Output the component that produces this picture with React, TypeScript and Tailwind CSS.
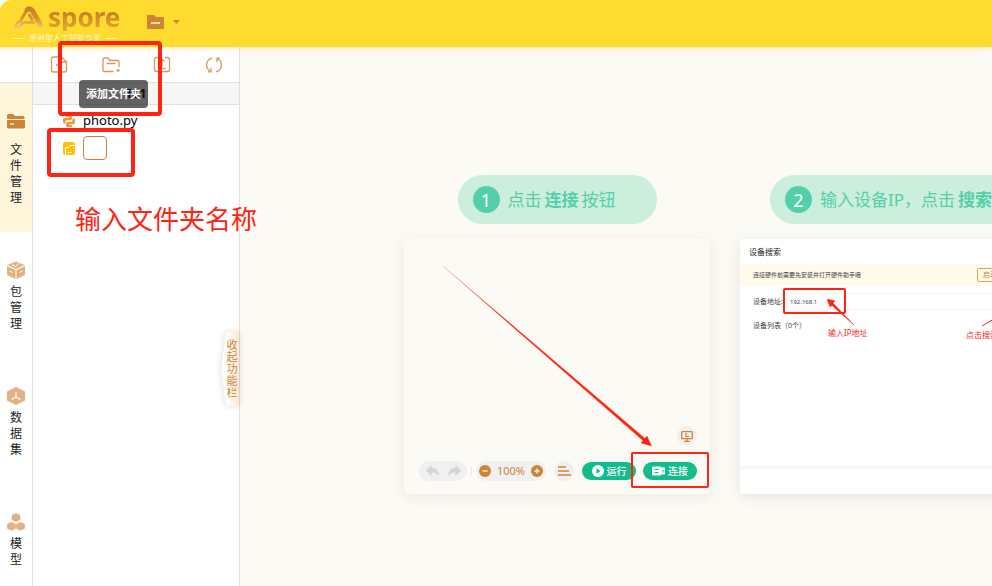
import { ReactNode } from 'react';

const ORANGE = '#cf8339';

function Logo() {
  return (
    <div className="flex flex-col">
      <div className="flex items-center gap-[3px] h-7">
        <svg width="32" height="25" viewBox="0 0 32 25" fill="none">
          <defs>
            <linearGradient id="mark" gradientUnits="userSpaceOnUse" x1="0" y1="2" x2="0" y2="25">
              <stop offset="0" stopColor="#c47d26" />
              <stop offset="0.5" stopColor="#d6952b" />
              <stop offset="1" stopColor="#f8d873" />
            </linearGradient>
          </defs>
          <path d="M14 5q3-3 6 1.500L27.500 20" stroke="url(#mark)" strokeWidth="5" strokeLinecap="round" />
          <path d="M13 6.500L8.500 14M16.500 10l2.500 4.500" stroke="url(#mark)" strokeWidth="3" strokeLinecap="round" />
          <path d="M21 17.500H12q-2.500 0-3.500 2-1.500 3.500-5 3.500" stroke="url(#mark)" strokeWidth="3" strokeLinecap="round" />
          <path d="M7.500 16q-4 1.500-5.500 7" stroke="url(#mark)" strokeWidth="2.500" strokeLinecap="round" />
        </svg>
        <span className="bg-gradient-to-b from-[#c47d26] from-30% to-[#e6ac2a] bg-clip-text text-[26px] leading-7 font-bold text-transparent">
          spore
        </span>
      </div>
      <div className="flex items-center gap-[5px] text-[8px] leading-[14px] text-[#fff7d0]">
        <i className="h-px w-[11px] bg-[#fff0a8]" />
        原创型人工智能专家
        <i className="h-px w-[11px] bg-[#fff0a8]" />
      </div>
    </div>
  );
}

function Header() {
  return (
    <header className="relative z-10 flex h-[47px] shrink-0 items-start rounded-tl-xl bg-[#ffdb2f] pt-[3px] pl-[13px] shadow-[0_1px_4px_rgba(255,200,60,0.5)]">
      <Logo />
      <button aria-label="项目菜单" className="mt-3 ml-[27px] flex items-center gap-[9px]">
        <svg width="17" height="14" viewBox="0 0 17 14">
          <path d="M0 0h7l2 2h8v12H0z" fill={ORANGE} />
          <path d="M4 8h9" stroke="#ffe48a" strokeWidth="2" />
        </svg>
        <svg width="7" height="4" viewBox="0 0 7 4">
          <path d="M0 0h7L3.500 4z" fill={ORANGE} />
        </svg>
      </button>
    </header>
  );
}

const navItems: { label: string; active?: boolean; icon: ReactNode }[] = [
  {
    label: '文件管理',
    active: true,
    icon: (
      <svg width="18" height="18" viewBox="0 0 18 18">
        <path d="M0 3.500Q0 2 1.500 2H6l2 2h8q1.500 0 1.500 1.500V7H0z" fill={ORANGE} />
        <path d="M0 8h18v7q0 1.500-1.500 1.500h-15Q0 16.500 0 15z" fill={ORANGE} />
        <path d="M3 12h4" stroke="#fff6dc" strokeWidth="1.300" />
      </svg>
    ),
  },
  {
    label: '包管理',
    icon: (
      <svg width="18" height="18" viewBox="0 0 18 18">
        <path d="M9 .5L17.500 4 9 8 .5 4z" fill="#e2b184" />
        <path d="M0 5l8.500 4v9L0 14zM18 5L9.500 9v9l8.500-4z" fill="#e2b184" />
        <path d="M5 3.500l3.500 2 4-3.500M2.500 10l3 1.500M12.500 11.500l3-1.500" stroke="#fff" strokeWidth="1" fill="none" />
      </svg>
    ),
  },
  {
    label: '数据集',
    icon: (
      <svg width="18" height="18" viewBox="0 0 18 18">
        <path d="M9 0l9 4.500v9L9 18l-9-4.500v-9z" fill="#e2b184" />
        <path d="M9 5v5l-4.500 2.500M9 10l4.500 2.500" stroke="#fff" strokeWidth="1.200" fill="none" />
      </svg>
    ),
  },
  {
    label: '模型',
    icon: (
      <svg width="18" height="18" viewBox="0 0 18 18" fill="#e2b184" stroke="#e2b184" strokeWidth="0.800" strokeLinejoin="round">
        <path d="M9 .5l4 2v4l-4 2-4-2v-4z" />
        <path d="M4.500 9.300l4 2v4l-4 2-4-2v-4zM13.500 9.300l4 2v4l-4 2-4-2v-4z" />
      </svg>
    ),
  },
];

function SideNav() {
  return (
    <nav className="flex w-[33px] shrink-0 flex-col border-r border-[#e3e0d8] bg-white">
      <div className="h-9 shrink-0 border-b border-[#e3e0d8]" />
      {navItems.map((item) => (
        <button
          key={item.label}
          className={`flex w-full shrink-0 flex-col items-center pt-[29px] pb-[26px] text-xs leading-4 text-[#222] ${
            item.active ? 'gap-3 bg-[#fff6dc]' : 'gap-[5px]'
          }`}
        >
          {item.icon}
          <span className="w-3 break-all">{item.label}</span>
        </button>
      ))}
    </nav>
  );
}

const tools = [
  { label: '添加文件', path: 'M10.500 1H3.500Q1.500 1 1.500 3v11q0 2 2 2h11q2 0 2-2V6l-5-5v5h5M6 9h6M9 6v6' },
  { label: '添加文件夹', path: 'M11.500 15.500H2.500Q1 15.500 1 14V3.500Q1 2 2.500 2H6l2 2.500h7.500Q17 4.500 17 6v5M4.500 7.500h9M14.500 14.500h3M16 13v3' },
  { label: '上传', path: 'M6 1.500H3.500q-2 0-2 2v10q0 2 2 2h11q2 0 2-2v-10q0-2-2-2H12M9 11V3M6.500 5.500L9 3l2.500 2.500M5.500 12.500h7' },
  { label: '刷新', path: 'M7 2.200A7 7 0 0 0 5 15M6 12V15.800H3M11 15.800A7 7 0 0 0 13 3M12 6V2.200H15' },
];

function CollapseTab() {
  return (
    <button className="absolute top-[285px] right-0 flex h-[74px] w-[18px] items-center justify-end pr-px text-[11px] leading-3 text-[#cf8339]">
      <svg className="absolute inset-0 overflow-visible drop-shadow-[0_0_3px_rgba(0,0,0,0.15)]" width="18" height="74" viewBox="0 0 18 74">
        <defs>
          <linearGradient id="tab" x1="0" x2="1">
            <stop offset="0.400" stopColor="#fffdfa" />
            <stop offset="1" stopColor="#ffe6d3" />
          </linearGradient>
        </defs>
        <path d="M8 0H18V74H8Q5 74 4.500 71L0 37 4.500 3Q5 0 8 0z" fill="url(#tab)" />
      </svg>
      <span className="relative w-3 break-all">收起功能栏</span>
    </button>
  );
}

function FilePanel() {
  return (
    <aside className="relative w-[207px] shrink-0 border-r border-[#e3e0d8] bg-white">
      <div className="flex h-9 items-center justify-between border-b border-[#e3e0d8] pr-4 pl-[17px]">
        {tools.map((tool) => (
          <button key={tool.label} aria-label={tool.label}>
            <svg width="18" height="18" viewBox="0 0 18 18" fill="none" stroke="#d9975c" strokeWidth="1.300">
              <path d={tool.path} />
            </svg>
          </button>
        ))}
      </div>
      <div className="h-[22px] border-b border-[#e3e0d8] bg-[#f6f6f6] text-center text-xs leading-[21px] font-bold text-[#222]">
        T21
      </div>
      <ul className="pl-[30px] text-[13px] text-black">
        <li className="flex h-[31px] items-center gap-2">
          <svg width="12" height="12" viewBox="0 0 12 12" fill="#f79433">
            <path d="M4.500 0h3Q9 0 9 1.500v2Q9 5 7.500 5h-3Q2.500 5 2.500 7v1.500h-1Q0 8.500 0 7V4.500Q0 3 1.500 3H6v-.7H3V1.500Q3 0 4.500 0z" />
            <path d="M7.500 12h-3Q3 12 3 10.500v-2Q3 7 4.500 7h3q2 0 2-2V3.500h1Q12 3.500 12 5v2.500Q12 9 10.500 9H6v.7h3v.8Q9 12 7.500 12z" />
          </svg>
          photo.py
        </li>
        <li className="flex h-6 items-center gap-2">
          <svg width="12" height="13" viewBox="0 0 12 13">
            <rect width="12" height="13" rx="2" fill="#ffc107" />
            <path d="M2.500 13V7q0-1.500 1.500-1.500h1.500l1.500-2H12M5 10.500h4" stroke="#fff" fill="none" />
          </svg>
          <input aria-label="文件夹名称" className="h-6 w-6 rounded border border-[#cf8339] bg-white outline-none" />
        </li>
      </ul>
      <CollapseTab />
    </aside>
  );
}

function StepTitle({ num, children }: { num: number; children: ReactNode }) {
  return (
    <h2 className="flex h-[49px] items-center gap-2 rounded-full bg-[#cbeedd] pr-[41px] pl-[15px] text-[17px] whitespace-nowrap text-[#54cfaa]">
      <span className="flex size-[27px] items-center justify-center rounded-full bg-[#54cfaa] text-lg text-white">{num}</span>
      <span>{children}</span>
    </h2>
  );
}

function EditorCard() {
  return (
    <div className="relative flex h-[255px] w-[306px] flex-col justify-end rounded bg-[#fbfaf5] px-[13px] pb-[13px] shadow-[0_3px_14px_rgba(120,110,80,0.12)]">
      <button aria-label="屏幕" className="mb-[15px] flex size-5 items-center justify-center self-end rounded-full bg-[#f0f0f0]">
        <svg width="12" height="11" viewBox="0 0 12 11" fill="none" stroke={ORANGE} strokeWidth="1.300">
          <rect x="0.700" y="0.700" width="10.600" height="7" rx="0.800" />
          <path d="M6 8v2M3 10.300h6M4 3h2M4 5.300h4" />
        </svg>
      </button>
      <div className="flex items-center pl-0.5">
        <div className="flex h-5 w-12 items-center justify-around rounded-full bg-[#f0f0f0] px-0.5">
          <button aria-label="撤销">
            <svg width="13" height="12" viewBox="0 0 13 12" fill="#d4d4d4">
              <path d="M5.500 0v3q7 0 7.500 8-3-4-7.500-3.500V11L0 5.500z" />
            </svg>
          </button>
          <button aria-label="重做">
            <svg width="13" height="12" viewBox="0 0 13 12" fill="#d4d4d4">
              <path d="M7.500 0v3Q.5 3 0 11q3-4 7.500-3.500V11L13 5.500z" />
            </svg>
          </button>
        </div>
        <i className="mx-1 h-2.5 w-px bg-[#e8e8e8]" />
        <div className="flex h-5 w-[70px] items-center justify-between rounded-full bg-[#f0f0f0] px-[3px] text-[11px] text-[#cf8339]">
          <button aria-label="缩小">
            <svg width="12" height="12" viewBox="0 0 12 12">
              <circle cx="6" cy="6" r="6" fill={ORANGE} />
              <path d="M3.500 6h5" stroke="#fff" strokeWidth="1.300" />
            </svg>
          </button>
          100%
          <button aria-label="放大">
            <svg width="12" height="12" viewBox="0 0 12 12">
              <circle cx="6" cy="6" r="6" fill={ORANGE} />
              <path d="M3.500 6h5M6 3.500v5" stroke="#fff" strokeWidth="1.300" />
            </svg>
          </button>
        </div>
        <button aria-label="对齐" className="ml-2 flex size-5 items-center justify-center rounded-full bg-[#f0f0f0]">
          <svg width="13" height="10" viewBox="0 0 13 10" stroke={ORANGE} strokeWidth="1.400">
            <path d="M0 1h8M0 5h11M0 9h13" />
          </svg>
        </button>
        <button className="ml-2 flex h-[18px] w-[54px] items-center justify-center gap-[3px] rounded-full bg-[#13bd8b] text-[10px] font-medium text-white">
          <svg width="12" height="12" viewBox="0 0 12 12">
            <circle cx="6" cy="6" r="6" fill="#fff" />
            <path d="M4.500 3l4 3-4 3z" fill="#13bd8b" />
          </svg>
          运行
        </button>
        <button className="ml-[7px] flex h-[18px] w-[54px] items-center justify-center gap-[3px] rounded-full bg-[#13bd8b] text-[10px] font-medium text-white">
          <svg width="13" height="10" viewBox="0 0 13 10">
            <path d="M1 .5h7q1 0 1 1v7q0 1-1 1H1q-1 0-1-1v-7q0-1 1-1zM9 1.500h4v7H9z" fill="#fff" />
            <path d="M2.500 3.500h4M2.500 6.500h4M11 3.500v3" stroke="#13bd8b" />
          </svg>
          连接
        </button>
      </div>
      {/* arrow pointing at the connect button */}
      <svg className="absolute top-[26px] left-[38px]" width="212" height="184" viewBox="0 0 212 184">
        <defs>
          <linearGradient id="fade" x1="0" y1="0" x2="1" y2="1">
            <stop offset="0" stopColor="#ff2314" stopOpacity="0.300" />
            <stop offset="0.300" stopColor="#ff2314" />
          </linearGradient>
        </defs>
        <path d="M1 1L203 173.500l2-2.500 4.500 10-10.500-3 2-2.500z" fill="url(#fade)" stroke="url(#fade)" strokeWidth="0.400" />
      </svg>
      <div className="absolute top-[213px] left-[227px] h-9 w-[78px] rounded-xs border-2 border-[#ff2314]" />
    </div>
  );
}

function SearchCard() {
  return (
    <div className="relative flex h-[255px] w-[323px] flex-col overflow-hidden rounded bg-white text-[7px] leading-3 text-[#444]">
      <h3 className="h-[25px] pl-[9px] text-[8px] leading-[26px] text-[#222]">设备搜索</h3>
      <div className="flex h-[22px] items-center justify-between bg-[#fffae9] px-[13px] text-[6px]">
        连接硬件前需要先安装并打开硬件助手哦
        <button className="h-3.5 w-[73px] rounded-xs border border-[#dca36f] pl-[5px] text-left text-[7px] text-[#cf8339]">
          启动硬件助手
        </button>
      </div>
      <div className="mt-[7px] flex items-center gap-1 pl-[13px]">
        <label htmlFor="ip" className="w-[29px] whitespace-nowrap">设备地址:</label>
        <input id="ip" defaultValue="192.168.1" className="h-[17px] min-w-0 flex-1 border-y border-[#f3f3f3] pl-1 text-[6px] outline-none" />
      </div>
      <div className="mt-2.5 pl-[13px]">设备列表（0个）</div>
      <div className="mt-auto h-7 border-t-[3px] border-[#f7f7f7]" />

      <div className="absolute top-[49px] left-[43px] h-[26px] w-[63px] rounded-xs border-2 border-[#ff2314]" />
      <svg className="absolute top-[60px] left-[87px]" width="28" height="27" viewBox="0 0 28 27">
        <path d="M0 0l8 2-2 2L27 26 5 6.500 3 8z" fill="#ff2314" stroke="#ff2314" strokeWidth="0.500" />
      </svg>
      <svg className="absolute top-[80px] left-[242px]" width="28" height="14" viewBox="0 0 28 14">
        <path d="M0 7L12 0" stroke="#ff2314" />
      </svg>
      <span className="absolute top-[88px] left-[88px] text-[8px] text-[#ff2314]">输入IP地址</span>
      <span className="absolute top-[90px] left-[226px] text-[8px] text-[#ff2314]">点击搜索</span>
    </div>
  );
}

export default function App() {
  return (
    <div className="relative flex h-screen flex-col overflow-hidden bg-[#fbfaf5] font-['Noto_Sans','Noto_Sans_CJK_SC',sans-serif]">
      <Header />
      <div className="flex min-h-0 flex-1">
        <SideNav />
        <FilePanel />
        <main className="flex min-w-0 flex-1 gap-[30px] overflow-hidden pt-32 pl-[164px]">
          <section className="flex shrink-0 flex-col items-center gap-[15px]">
            <StepTitle num={1}>
              点击<b className="mx-[3px]">连接</b>按钮
            </StepTitle>
            <EditorCard />
          </section>
          <section className="flex shrink-0 flex-col items-center gap-[15px]">
            <StepTitle num={2}>
              输入设备IP，点击<b className="ml-[3px]">搜索</b>
            </StepTitle>
            <div className="rounded shadow-[0_3px_14px_rgba(120,110,80,0.15)]">
              <SearchCard />
            </div>
          </section>
        </main>
      </div>

      {/* guide marks and tooltip over the page */}
      <div role="tooltip" className="absolute top-20 left-[79px] z-20 flex h-7 w-[69px] items-center justify-center rounded-sm bg-black/60 text-[11px] font-bold whitespace-nowrap text-white">
        添加文件夹
      </div>
      <div className="absolute top-[41px] left-[58px] z-20 h-[75px] w-[104px] rounded-sm border-4 border-[#ff2314]" />
      <div className="absolute top-32 left-[47px] z-20 h-[49px] w-[88px] rounded-sm border-4 border-[#ff2314]" />
      <p className="absolute top-[199px] left-[75px] z-20 text-[26px] leading-10 whitespace-nowrap text-[#ff2314]">输入文件夹名称</p>
    </div>
  );
}
